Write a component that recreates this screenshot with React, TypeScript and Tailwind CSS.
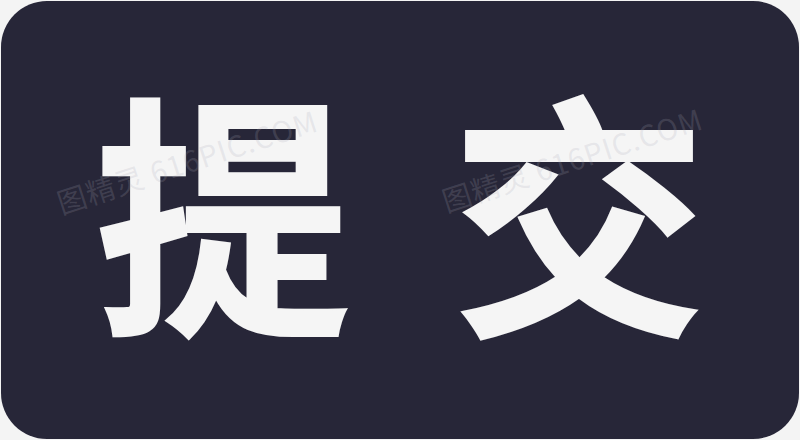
export default function App() {
  return (
    <div className="h-[440px] w-[800px] bg-[#f4f4f4] p-px">
      <div className="relative flex h-full w-full items-center justify-center gap-[100px] overflow-hidden rounded-[46px] bg-[#272638] pb-[30px] pl-[2px]">
        <span className="text-[256px] font-bold leading-none text-[#f5f5f5] [font-family:'Noto_Sans_CJK_SC',sans-serif] [-webkit-text-stroke:2px_#f5f5f5]">提</span>
        <span className="text-[256px] font-bold leading-none text-[#f5f5f5] [font-family:'Noto_Sans_CJK_SC',sans-serif] [-webkit-text-stroke:2px_#f5f5f5]">交</span>
        <div className="absolute left-[50px] top-[138px] -rotate-[18deg] whitespace-nowrap text-[29px] tracking-[1px] text-[rgba(170,170,182,0.2)] [font-family:'Noto_Sans_CJK_SC',sans-serif]">
          图精灵 616PIC.COM
        </div>
        <div className="absolute left-[435px] top-[136px] -rotate-[18deg] whitespace-nowrap text-[29px] tracking-[1px] text-[rgba(170,170,182,0.2)] [font-family:'Noto_Sans_CJK_SC',sans-serif]">
          图精灵 616PIC.COM
        </div>
      </div>
    </div>
  )
}
